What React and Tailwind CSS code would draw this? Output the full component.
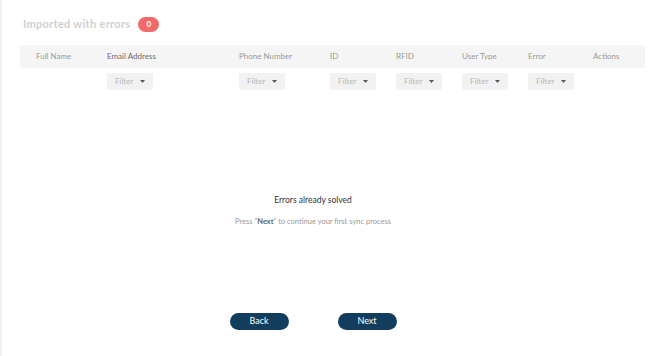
import React from "react";

const columns = ["Full Name", "Email Address", "Phone Number", "ID", "RFID", "User Type", "Error", "Actions"];
// which columns get a filter dropdown
const filterable = [false, true, true, true, true, true, true, false];

const FilterBox = () => (
  <div className="flex h-[17px] w-[46px] items-center justify-between rounded-[2px] bg-[#f2f2f2] pl-[8px] pr-[8px] text-[8px] text-[#b8b8b8]">
    <span>Filter</span>
    <svg width="5" height="3" viewBox="0 0 5 3">
      <path d="M0 0 L5 0 L2.5 3 Z" fill="#5a5a5a" />
    </svg>
  </div>
);

export default function App() {
  return (
    <div
      className="h-[356px] w-[663px] overflow-hidden border-l-2 border-[#f1f1f1] bg-white"
      style={{ fontFamily: "Lato, 'Open Sans', sans-serif" }}
    >
      {/* Title */}
      <div className="flex items-center gap-[8px] pl-[21px] pt-[16px]">
        <h1 className="text-[11px] font-bold tracking-[0.3px] text-[#d0d0d0]">Imported with errors</h1>
        <span className="flex h-[15px] w-[21px] items-center justify-center rounded-full bg-[#f06a6a] text-[8px] font-bold text-white">
          0
        </span>
      </div>

      {/* Table head */}
      <div className="ml-[18px] mt-[12px] w-[625px]">
        <div className="grid h-[23px] grid-cols-[71px_132px_91px_66px_66px_66px_65px_1fr] items-center rounded-[3px] bg-[#f5f5f5] pl-4 text-[8px] text-[#9a9a9a]">
          {columns.map((c) => (
            <span key={c} className={c === "Email Address" ? "text-[#6a6a6a]" : ""}>
              {c}
            </span>
          ))}
        </div>
        <div className="mt-[5px] grid grid-cols-[71px_132px_91px_66px_66px_66px_65px_1fr] pl-4">
          {filterable.map((f, i) => (
            <div key={i}>{f && <FilterBox />}</div>
          ))}
        </div>
      </div>

      {/* Empty state */}
      <div className="flex w-[622px] flex-col items-center">
        <p className="mt-[104px] text-[8.5px] text-[#333]">Errors already solved</p>
        <p className="mt-[10px] text-[7.5px] text-[#9a9a9a]">
          Press "<span className="font-bold text-[#666]">Next</span>" to continue your first sync process
        </p>
        <div className="mt-[85px] flex gap-[49px]">
          <button className="h-[17px] w-[59px] rounded-full bg-[#133d5c] text-[9px] text-white">Back</button>
          <button className="h-[17px] w-[59px] rounded-full bg-[#133d5c] text-[9px] text-white">Next</button>
        </div>
      </div>
    </div>
  );
}
